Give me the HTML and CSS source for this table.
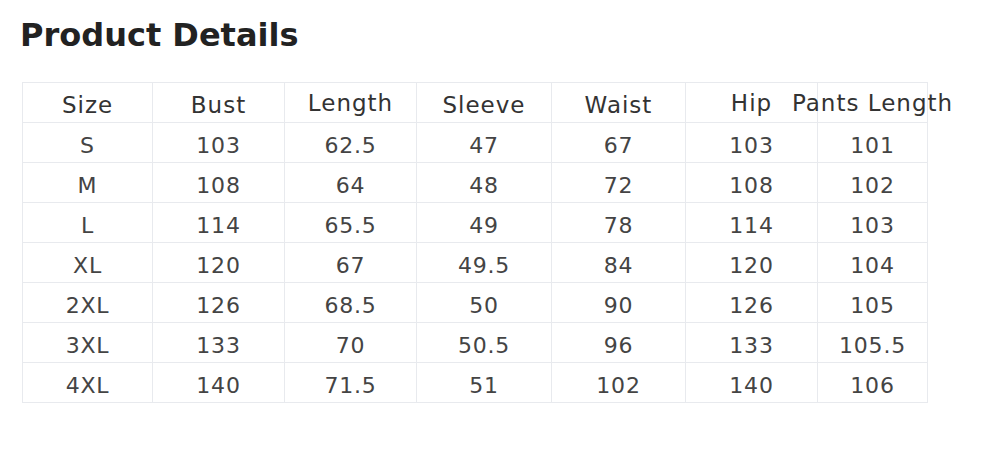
FILE: index.html
```html
<!DOCTYPE html>
<html>
<head>
<meta charset="utf-8">
<link rel="stylesheet" href="styles.css">
</head>
<body>
<div class="page">
  <h2 class="title">Product Details</h2>
  <table class="size-table">
    <colgroup>
      <col class="c1"><col class="c2"><col class="c3"><col class="c4"><col class="c5"><col class="c6"><col class="c7">
    </colgroup>
    <thead>
      <tr>
        <th>Size</th><th>Bust</th><th class="up">Length</th><th>Sleeve</th><th>Waist</th><th class="up">Hip</th><th class="up"><div class="overflow-center"><span>Pants Length</span></div></th>
      </tr>
    </thead>
    <tbody>
      <tr><td>S</td><td>103</td><td>62.5</td><td>47</td><td>67</td><td>103</td><td>101</td></tr>
      <tr><td>M</td><td>108</td><td>64</td><td>48</td><td>72</td><td>108</td><td>102</td></tr>
      <tr><td>L</td><td>114</td><td>65.5</td><td>49</td><td>78</td><td>114</td><td>103</td></tr>
      <tr><td>XL</td><td>120</td><td>67</td><td>49.5</td><td>84</td><td>120</td><td>104</td></tr>
      <tr><td>2XL</td><td>126</td><td>68.5</td><td>50</td><td>90</td><td>126</td><td>105</td></tr>
      <tr><td>3XL</td><td>133</td><td>70</td><td>50.5</td><td>96</td><td>133</td><td>105.5</td></tr>
      <tr><td>4XL</td><td>140</td><td>71.5</td><td>51</td><td>102</td><td>140</td><td>106</td></tr>
    </tbody>
  </table>
</div>
</body>
</html>
```
FILE: styles.css
```css
html, body {
  margin: 0;
  padding: 0;
  background: #ffffff;
}
.page {
  padding: 16px 18px;
  font-family: "DejaVu Sans", Verdana, sans-serif;
}
.title {
  margin: 0 0 28px 2px;
  font-size: 32px;
  line-height: 38px;
  font-weight: bold;
  color: #222222;
}
.size-table {
  margin-left: 4px;
  border-collapse: collapse;
  table-layout: fixed;
  width: 906px;
}
.c1 { width: 130px; }
.c2 { width: 132px; }
.c3 { width: 132px; }
.c4 { width: 135px; }
.c5 { width: 134px; }
.c6 { width: 132px; }
.c7 { width: 110px; }
.size-table th,
.size-table td {
  border: 1px solid #e8eaee;
  text-align: center;
  padding: 0;
  font-size: 22px;
  letter-spacing: 0.8px;
  white-space: nowrap;
}
.size-table td {
  color: #444444;
  padding-top: 5px;
  height: 34px;
}
.size-table th {
  font-weight: normal;
  font-size: 23px;
  letter-spacing: 1px;
  color: #333333;
  padding-top: 4px;
  height: 35px;
}
.size-table th.up {
  padding-top: 1px;
  padding-bottom: 0;
  height: 38px;
}
.overflow-center {
  display: flex;
  justify-content: center;
}
.overflow-center span {
  flex-shrink: 0;
}
```
